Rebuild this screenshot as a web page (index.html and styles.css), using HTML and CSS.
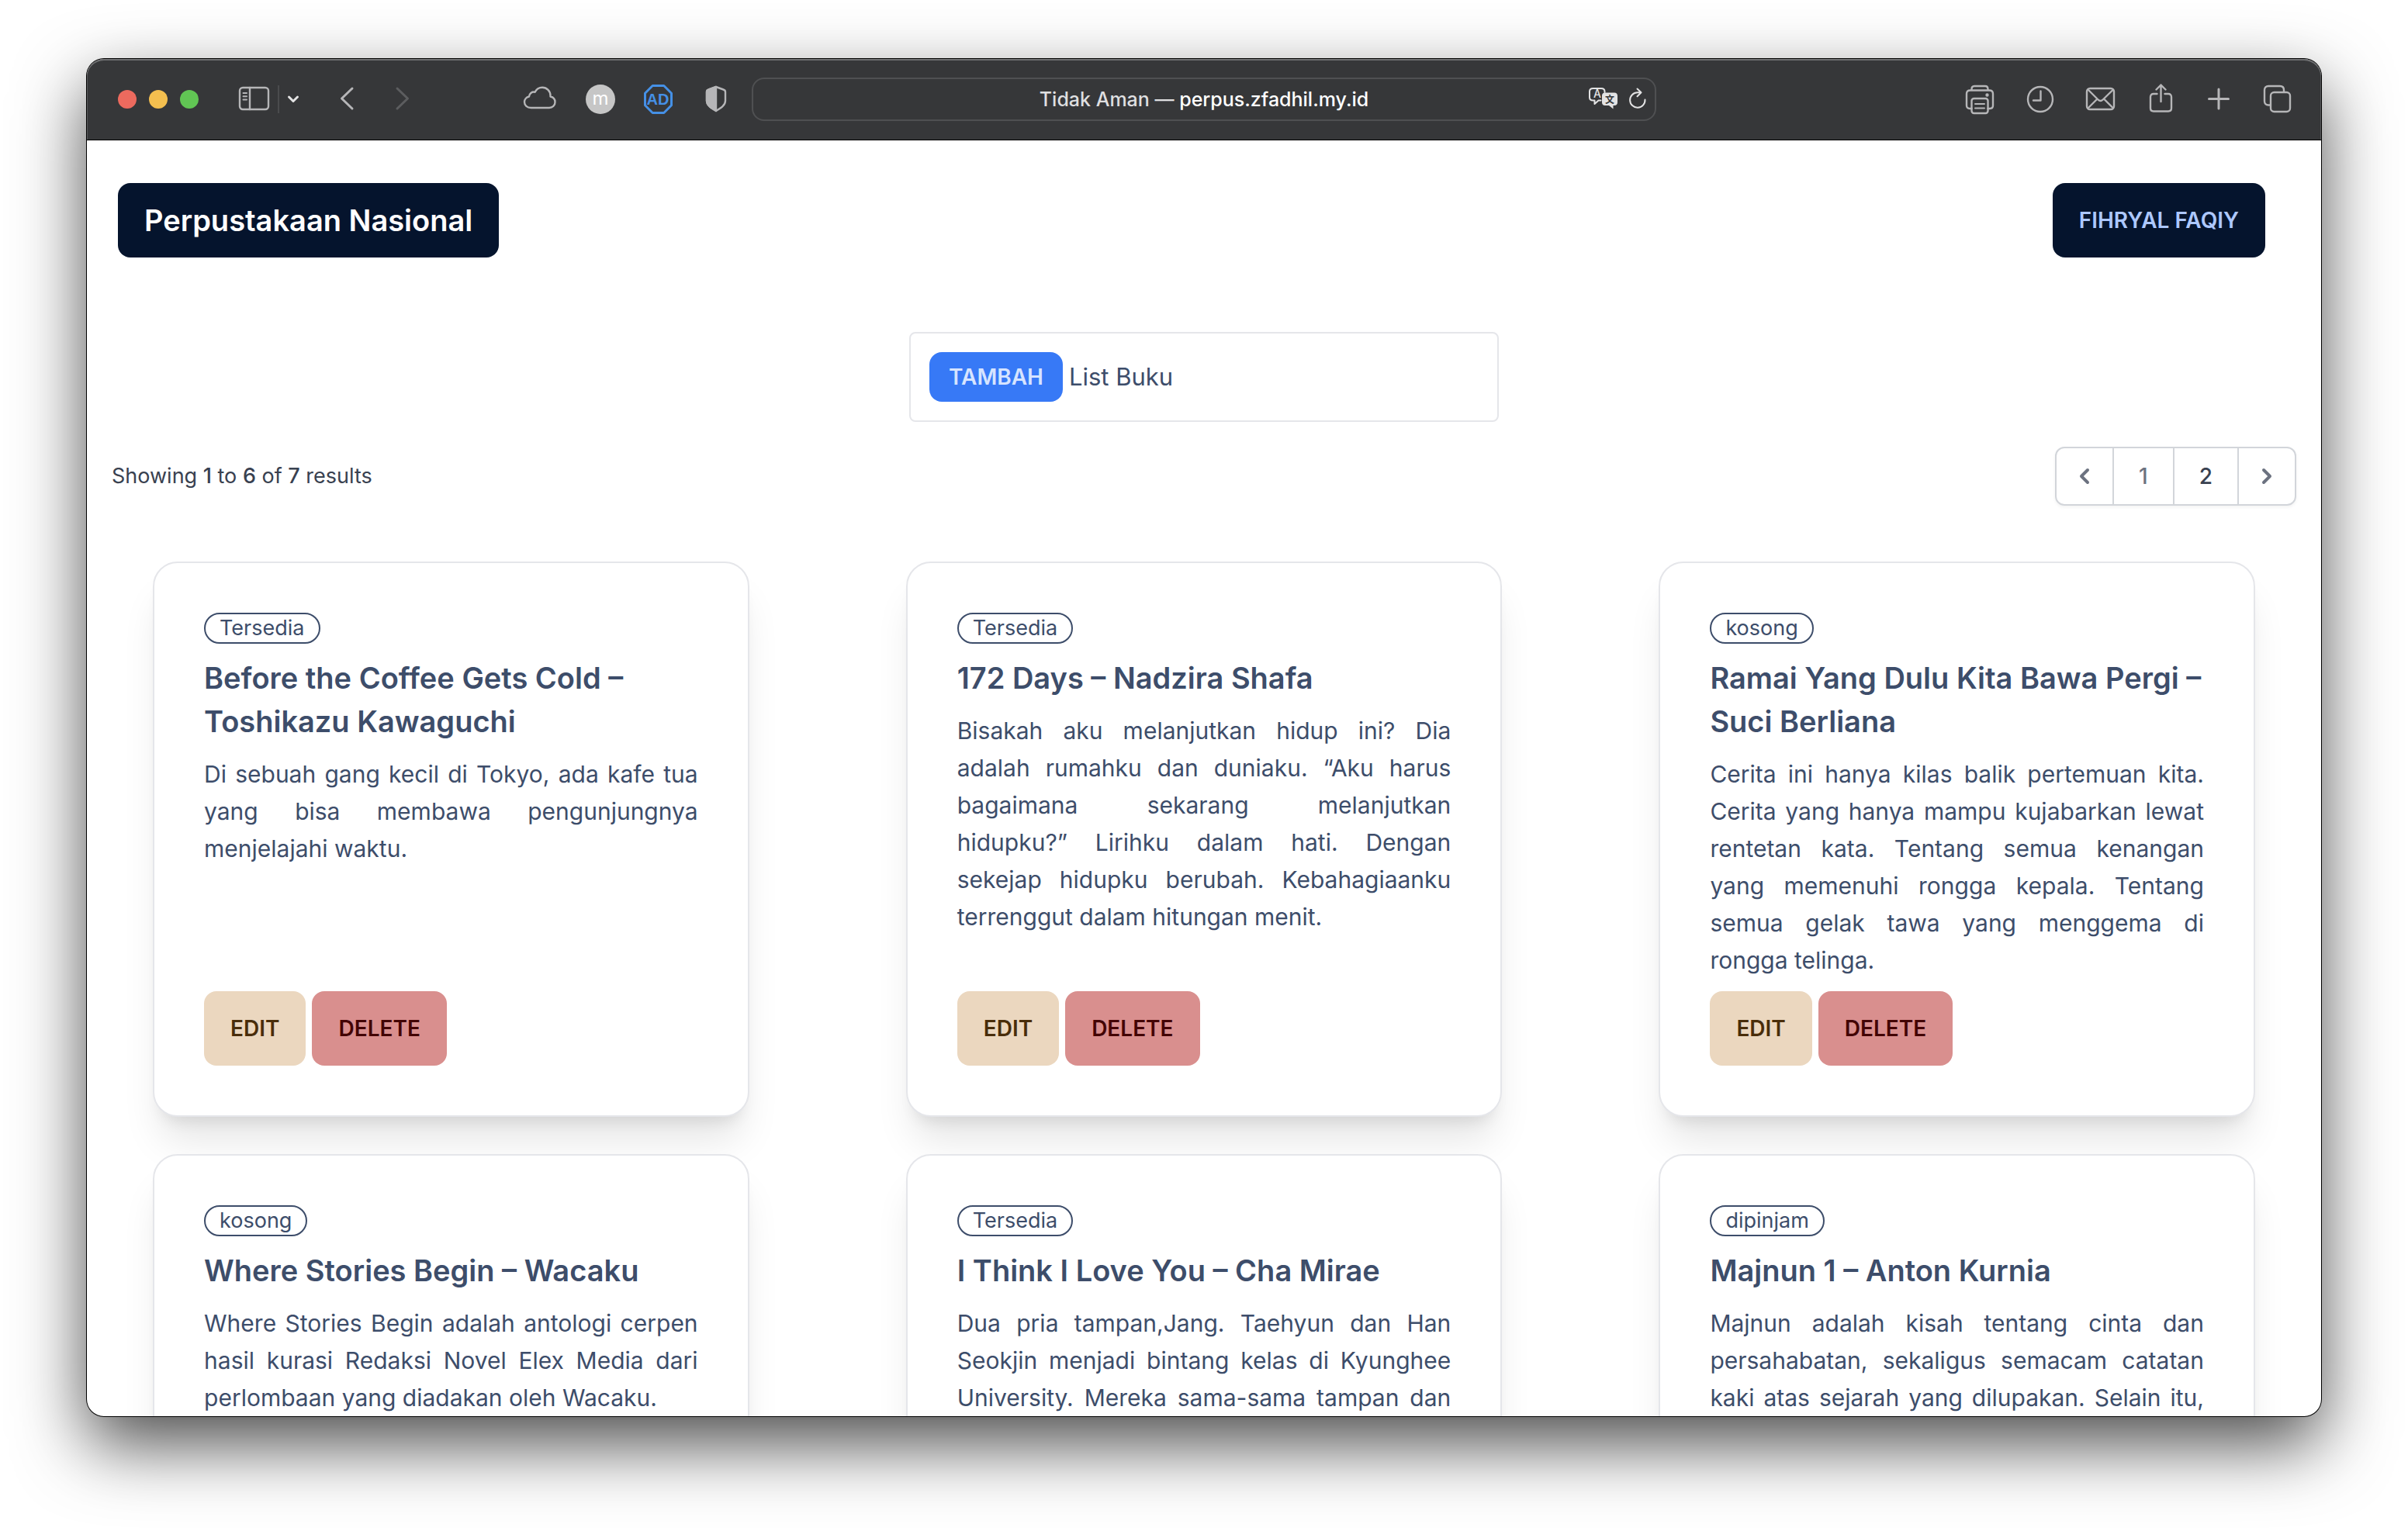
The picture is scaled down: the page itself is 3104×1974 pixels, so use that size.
FILE: index.html
```html
<!DOCTYPE html>
<html lang="id">
<head>
<meta charset="utf-8">
<meta name="viewport" content="width=device-width, initial-scale=1">
<title>Perpustakaan Nasional</title>
<link rel="stylesheet" href="styles.css">
</head>
<body>
<div class="window">
  <header class="toolbar">
    <div class="toolbar-left">
      <div class="lights">
        <button class="light light-close" aria-label="Close"></button>
        <button class="light light-min" aria-label="Minimise"></button>
        <button class="light light-max" aria-label="Zoom"></button>
      </div>
      <div class="sidebar-tools">
        <button class="tool" aria-label="Sidebar"><svg width="40" height="40" viewBox="0 0 40 40"><rect x="1" y="5" width="37" height="28" rx="4"/><path d="M14 5v28"/><path class="thin" d="M5.500 12h4.500M5.500 16.300h4.500M5.500 20.600h4.500"/></svg></button>
        <span class="divider"></span>
        <button class="tool tool-bright" aria-label="Tab groups"><svg width="16" height="40" viewBox="0 0 16 40"><path class="bold" d="M2.500 17l5.500 5.500 5.500-5.500"/></svg></button>
      </div>
      <div class="history">
        <button class="tool" aria-label="Back"><svg width="18" height="40" viewBox="0 0 18 40"><path class="bold" d="M16 6L2.500 19 16 32"/></svg></button>
        <button class="tool tool-dim" aria-label="Forward"><svg width="18" height="40" viewBox="0 0 18 40"><path class="bold" d="M2 6l13.500 13L2 32"/></svg></button>
      </div>
      <div class="extensions">
        <button class="tool" aria-label="iCloud"><svg width="44" height="40" viewBox="0 0 44 40"><path d="M9.500 31C4.500 31 1 27.700 1 23.500c0-3.500 2.500-6.300 6-7 .3-4 4-6.700 7.600-5.700C16.500 7 20 4.800 24 4.800c6 0 10.500 4.700 10.500 10.400v1.300c3.500.8 6 3.700 6 7.200 0 4.300-3.400 7.300-7.500 7.300z"/></svg></button>
        <button class="tool" aria-label="m"><svg width="38" height="40" viewBox="0 0 38 40"><circle class="disc" cx="19" cy="20" r="19"/><text class="disc-text" x="19" y="27" text-anchor="middle">m</text></svg></button>
        <button class="tool tool-blue" aria-label="AdGuard"><svg width="38" height="40" viewBox="0 0 38 40"><path class="bold" d="M12.200 2.500h14.600l9.700 9.700v15.600l-9.700 9.700H12.200l-9.700-9.700V12.200z"/><text class="ad-text" x="19" y="27" text-anchor="middle">AD</text></svg></button>
        <button class="tool" aria-label="Privacy report"><svg width="34" height="40" viewBox="-6 0 34 40"><path d="M14 4l9.500 3.500c1.500.5 2.500 1.500 2.500 3V22c0 6-6 9.500-12 13C8 31.500 2 28 2 22V10.500c0-1.500 1-2.500 2.500-3z"/><path class="solid" d="M14 4v31C8 31.500 2 28 2 22V10.500c0-1.500 1-2.500 2.500-3z"/></svg></button>
      </div>
    </div>
    <div class="address">
      <button class="address-text">Tidak Aman — <span class="domain">perpus.zfadhil.my.id</span></button>
      <div class="address-tools">
        <button class="tool tool-bright" aria-label="Translate"><svg width="40" height="40" viewBox="0 0 40 40"><path class="thin" d="M16.500 21.500h-3l-5 4.500v-4.500H6.500c-3 0-4.500-1.500-4.500-4V10c0-2.500 1.500-4 4.500-4h10.500c3 0 4.500 1.500 4.500 4v1"/><text class="glyph" x="12" y="18" text-anchor="middle">A</text><path class="chip" d="M22 11.500h12c2.500 0 4 1.500 4 4V24c0 2.500-1.500 4-4 4h-1.500v4.500L27 28h-5c-2.500 0-4-1.500-4-4v-8.500c0-2.500 1.500-4 4-4z"/><text class="glyph glyph-dark" x="28" y="24.500" text-anchor="middle">文</text></svg></button>
        <button class="tool tool-bright" aria-label="Reload"><svg width="24" height="40" viewBox="0 0 24 40"><path class="mid" d="M21.500 20.500a9.700 9.700 0 1 1-9.700-9.200h4.500M11.500 6.500l5 4.800-5 5"/></svg></button>
      </div>
    </div>
    <div class="toolbar-right">
      <button class="tool" aria-label="Print"><svg width="40" height="40" viewBox="0 0 40 40"><path d="M9.500 32H7c-2.500 0-4-1.500-4-4V13c0-3 1.500-4.500 4.500-4.500h25c3 0 4.500 1.500 4.500 4.500v15c0 2.500-1.500 4-4 4h-2.500M9.500 8.500V7c0-2.500 1-4 3.500-4h14c2.500 0 3.500 1.500 3.500 4v1.500"/><rect x="9.500" y="19" width="21" height="19" rx="3"/><path class="thin" d="M14 26h12M14 31.500h12"/><circle class="solid" cx="29.500" cy="14.500" r="1"/></svg></button>
      <button class="tool" aria-label="History"><svg width="40" height="40" viewBox="0 0 40 40"><circle cx="20" cy="20" r="16"/><path d="M20.500 9.500v12h-9.500"/></svg></button>
      <button class="tool" aria-label="Mail"><svg width="40" height="40" viewBox="0 0 40 40"><rect x="2" y="6" width="35" height="27" rx="4"/><path d="M4 8l12.500 12.500c2 2 4.200 2 6.200 0L35.500 8M4 31l11.500-11.500M35.500 31L24 19.500"/></svg></button>
      <button class="tool" aria-label="Share"><svg width="40" height="40" viewBox="0 0 40 40"><path d="M14.500 13H10c-2.500 0-4 1.500-4 4v14.500c0 2.500 1.500 4 4 4h19c2.500 0 4-1.500 4-4V17c0-2.500-1.500-4-4-4h-4.500M19.500 23V1.500M13.500 7.500l6-6 6 6"/></svg></button>
      <button class="tool" aria-label="New tab"><svg width="34" height="40" viewBox="3 0 34 40"><path class="bold" d="M19 7v25M6.500 19.500h25"/></svg></button>
      <button class="tool" aria-label="Tab overview"><svg width="40" height="40" viewBox="0 0 40 40"><path d="M10.500 27.500H8c-3 0-5-2-5-5V8c0-3 2-5 5-5h15c3 0 5 2 5 5v2.500"/><rect x="11" y="11" width="25" height="25" rx="4.500"/></svg></button>
    </div>
  </header>

  <main class="page">
    <nav class="navbar">
      <a class="btn btn-nav brand" href="#">Perpustakaan Nasional</a>
      <button class="btn btn-nav">FIHRYAL FAQIY</button>
    </nav>

    <div class="list-head">
      <button class="btn btn-primary">TAMBAH</button>
      <span>List Buku</span>
    </div>

    <div class="results">
      <p>Showing <b>1</b> to <b>6</b> of <b>7</b> results</p>
      <nav class="pager" aria-label="Pagination">
        <span class="pager-item pager-arrow"><svg width="40" height="40" viewBox="0 0 20 20"><path d="M12.707 5.293a1 1 0 010 1.414L9.414 10l3.293 3.293a1 1 0 01-1.414 1.414l-4-4a1 1 0 010-1.414l4-4a1 1 0 011.414 0z"/></svg></span>
        <span class="pager-item pager-current">1</span>
        <a class="pager-item" href="#">2</a>
        <a class="pager-item pager-arrow" href="#" aria-label="Next"><svg width="40" height="40" viewBox="0 0 20 20"><path d="M7.293 14.707a1 1 0 010-1.414L10.586 10 7.293 6.707a1 1 0 011.414-1.414l4 4a1 1 0 010 1.414l-4 4a1 1 0 01-1.414 0z"/></svg></a>
      </nav>
    </div>

    <div class="books">
      <article class="card">
        <span class="badge">Tersedia</span>
        <h2>Before the Coffee Gets Cold – Toshikazu Kawaguchi</h2>
        <p>Di sebuah gang kecil di Tokyo, ada kafe tua yang bisa membawa pengunjungnya menjelajahi waktu.</p>
        <div class="actions"><button class="btn btn-edit">EDIT</button><button class="btn btn-delete">DELETE</button></div>
      </article>
      <article class="card">
        <span class="badge">Tersedia</span>
        <h2>172 Days – Nadzira Shafa</h2>
        <p>Bisakah aku melanjutkan hidup ini? Dia adalah rumahku dan duniaku. “Aku harus bagaimana sekarang melanjutkan hidupku?”&nbsp;Lirihku dalam hati. Dengan sekejap hidupku berubah. Kebahagiaanku terrenggut dalam hitungan menit.</p>
        <div class="actions"><button class="btn btn-edit">EDIT</button><button class="btn btn-delete">DELETE</button></div>
      </article>
      <article class="card">
        <span class="badge">kosong</span>
        <h2>Ramai Yang Dulu Kita Bawa Pergi – Suci Berliana</h2>
        <p>Cerita ini hanya kilas balik pertemuan kita. Cerita yang hanya mampu kujabarkan lewat rentetan kata. Tentang semua kenangan yang memenuhi rongga kepala. Tentang semua gelak tawa yang menggema di rongga telinga.</p>
        <div class="actions"><button class="btn btn-edit">EDIT</button><button class="btn btn-delete">DELETE</button></div>
      </article>
      <article class="card">
        <span class="badge">kosong</span>
        <h2>Where Stories Begin – Wacaku</h2>
        <p>Where Stories Begin adalah antologi cerpen hasil kurasi Redaksi Novel Elex Media dari perlombaan yang diadakan oleh Wacaku.</p>
      </article>
      <article class="card">
        <span class="badge">Tersedia</span>
        <h2>I Think I Love You – Cha Mirae</h2>
        <p class="continued">Dua pria tampan,Jang. Taehyun dan Han Seokjin menjadi bintang kelas di Kyunghee University. Mereka sama-sama tampan dan</p>
      </article>
      <article class="card">
        <span class="badge">dipinjam</span>
        <h2>Majnun 1 – Anton Kurnia</h2>
        <p class="continued">Majnun adalah kisah tentang cinta dan persahabatan, sekaligus semacam catatan kaki atas sejarah yang dilupakan. Selain itu,</p>
      </article>
    </div>
  </main>
</div>
</body>
</html>
```
FILE: styles.css
```css
*, *::before, *::after { box-sizing: border-box; }

body {
  margin: 0;
  height: 100vh;
  padding: 76px 112px 148px;
  background: #fff;
  color: #3d4d6a;
  font-family: Inter, "Liberation Sans", "Noto Sans CJK SC", sans-serif;
  font-size: 30px;
  line-height: 48px;
  overflow: hidden;
}

h2, p { margin: 0; }
button { margin: 0; padding: 0; border: 0; background: none; color: inherit; font: inherit; }
a { color: inherit; text-decoration: none; }
svg { display: block; overflow: visible; }

/* Window frame */
.window {
  height: 100%;
  display: flex;
  flex-direction: column;
  overflow: hidden;
  background: #fff;
  border-radius: 22px;
  box-shadow: 0 0 0 1px #000, 0 36px 90px rgba(0, 0, 0, 0.7);
}

.toolbar {
  flex: none;
  display: grid;
  grid-template-columns: 1fr 1166px 1fr;
  align-items: center;
  height: 105px;
  background: #363739;
  border-bottom: 1px solid #000;
  border-radius: 22px 22px 0 0;
  box-shadow: inset 0 2px 0 #6f7072, inset 1px 0 0 #5a5b5d, inset -1px 0 0 #5a5b5d;
}

.toolbar-left, .toolbar-right { display: flex; align-items: center; }
.toolbar-left { padding: 0 32px 0 40px; gap: 52px; }
.toolbar-right { justify-content: flex-end; gap: 38px; padding-right: 36px; }
.lights { display: flex; gap: 16px; }
.light { width: 24px; height: 24px; border-radius: 50%; }
.light-close { background: #ec6a5e; }
.light-min { background: #f4bf4f; }
.light-max { background: #61c554; }
.sidebar-tools { display: flex; align-items: center; gap: 10px; }
.divider { width: 2px; height: 36px; background: #4a4b4d; }
.history { display: flex; gap: 54px; }
.extensions { display: flex; gap: 36px; margin-left: auto; }

.tool { color: #b6b6b8; }
.tool-bright { color: #e3e3e4; }
.tool-dim { color: #5c5d5f; }
.tool-blue { color: #4590e6; }
.tool svg { fill: none; stroke: currentColor; stroke-width: 2.400; stroke-linecap: round; stroke-linejoin: round; }
.tool .thin { stroke-width: 2; }
.tool .mid { stroke-width: 2; }
.tool .bold { stroke-width: 3; }
.tool .solid { fill: currentColor; }
.tool .chip { fill: currentColor; stroke: none; }
.tool text { stroke: none; fill: currentColor; }
.tool .disc { fill: #c6c6c6; stroke: none; }
.tool .disc-text { fill: #fff; font-size: 24px; }
.tool .ad-text { font-family: "Liberation Sans", sans-serif; font-size: 20px; font-weight: 700; }
.tool .glyph { font-size: 14px; font-weight: 500; }
.tool .glyph-dark { fill: #363739; font-family: "Noto Sans CJK SC", sans-serif; font-size: 12px; font-weight: 700; }

.address {
  display: grid;
  grid-template-columns: 1fr auto 1fr;
  align-items: center;
  height: 56px;
  padding: 0 10px;
  border: 2px solid #4f5052;
  border-radius: 16px;
}
.address-text { grid-column: 2; color: #dfdfe0; font-size: 25px; font-weight: 500; line-height: 32px; }
.domain { color: #fff; }
.address-tools { display: flex; justify-content: flex-end; gap: 12px; }

/* Page */
.page { flex: 1; min-height: 0; overflow: hidden; }

.navbar { display: flex; justify-content: space-between; padding: 55px 72px 96px 40px; }

.btn {
  display: inline-flex;
  align-items: center;
  justify-content: center;
  height: 96px;
  padding: 0 34px;
  border-radius: 16px;
  font-size: 28px;
  font-weight: 600;
  line-height: 32px;
}
.btn-nav { background: #05142d; color: #adc8ff; }
.brand { color: #fff; font-size: 38px; }
.btn-primary { height: 64px; padding: 0 25px; background: #3779f6; color: #d6e4ff; }
.btn-edit { background: #ebd7bf; color: #492d0a; }
.btn-delete { background: #d98f8e; color: #430404; }

.list-head {
  display: flex;
  align-items: center;
  gap: 8px;
  width: 760px;
  max-width: 100%;
  margin: 0 auto;
  padding: 24px;
  border: 2px solid #e5e6ea;
  border-radius: 8px;
  font-size: 31px;
}

.results {
  display: flex;
  align-items: center;
  justify-content: space-between;
  padding: 32px 32px 72px;
  color: #394150;
  font-size: 27px;
  line-height: 40px;
}
.results b { font-weight: 500; }

.pager {
  display: flex;
  border: 2px solid #d2d5da;
  border-radius: 12px;
  box-shadow: 0 2px 4px rgba(0, 0, 0, 0.05);
  font-size: 28px;
}
.pager-item { padding: 16px 32px; font-weight: 500; }
.pager-item + .pager-item { border-left: 2px solid #d2d5da; }
.pager-arrow { padding: 16px; color: #6c7280; }
.pager-item + .pager-arrow { padding: 16px; }
.pager-arrow svg { fill: currentColor; }
.pager-current { color: #6c7280; }

.books {
  display: grid;
  grid-template-columns: repeat(3, 1fr);
  gap: 48px;
  padding: 0 8px;
}

.card {
  display: flex;
  flex-direction: column;
  align-items: flex-start;
  gap: 16px;
  width: 83.300%;
  min-height: 716px;
  margin: 0 auto;
  padding: 64px;
  background: #fff;
  border: 2px solid #e5e6ea;
  border-radius: 32px;
  box-shadow: 0 40px 50px -10px rgba(0, 0, 0, 0.1), 0 16px 20px -12px rgba(0, 0, 0, 0.1);
}
.card h2 { font-size: 38px; font-weight: 600; line-height: 56px; }
.card p { flex: 1; align-self: stretch; text-align: justify; }
.card .continued { text-align-last: justify; }
.badge {
  height: 40px;
  padding: 0 18px;
  border: 2px solid currentColor;
  border-radius: 20px;
  font-size: 27px;
  line-height: 36px;
}
.actions { display: flex; gap: 8px; }
```
